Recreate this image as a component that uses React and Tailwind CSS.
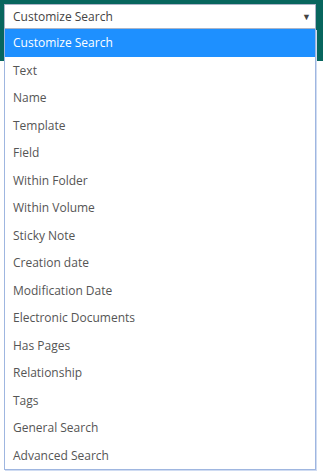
import React from "react";

const items = [
  "Customize Search",
  "Text",
  "Name",
  "Template",
  "Field",
  "Within Folder",
  "Within Volume",
  "Sticky Note",
  "Creation date",
  "Modification Date",
  "Electronic Documents",
  "Has Pages",
  "Relationship",
  "Tags",
  "General Search",
  "Advanced Search",
];

export default function App() {
  return (
    <div
      className="relative w-[323px] h-[473px] bg-white overflow-hidden"
      style={{ fontFamily: '"Open Sans", "Noto Sans", sans-serif' }}
    >
      <div className="absolute left-0 top-0 w-full h-[61px] bg-[#07665e]" />
      <div className="relative pt-[4px] pl-[4px] w-[316px]">
        <div className="h-[25px] bg-white border border-[#aab4c8] flex items-center justify-between pl-[8px] pr-[4px]">
          <span className="text-[12px] text-[#444] pt-[1px]">Customize Search</span>
          <span className="text-[9px] text-[#444] leading-none">▼</span>
        </div>
        <div className="bg-white border border-t-0 border-[#9fb6e0] shadow-[1px_1px_0_#d0dcf2]">
          {items.map((it, i) => (
            <div
              key={it}
              className={
                "h-[27.5px] flex items-center pl-[8px] pt-[1px] text-[12px] " +
                (i === 0 ? "bg-[#1e90ff] text-white" : "text-[#555]")
              }
            >
              {it}
            </div>
          ))}
        </div>
      </div>
    </div>
  );
}
